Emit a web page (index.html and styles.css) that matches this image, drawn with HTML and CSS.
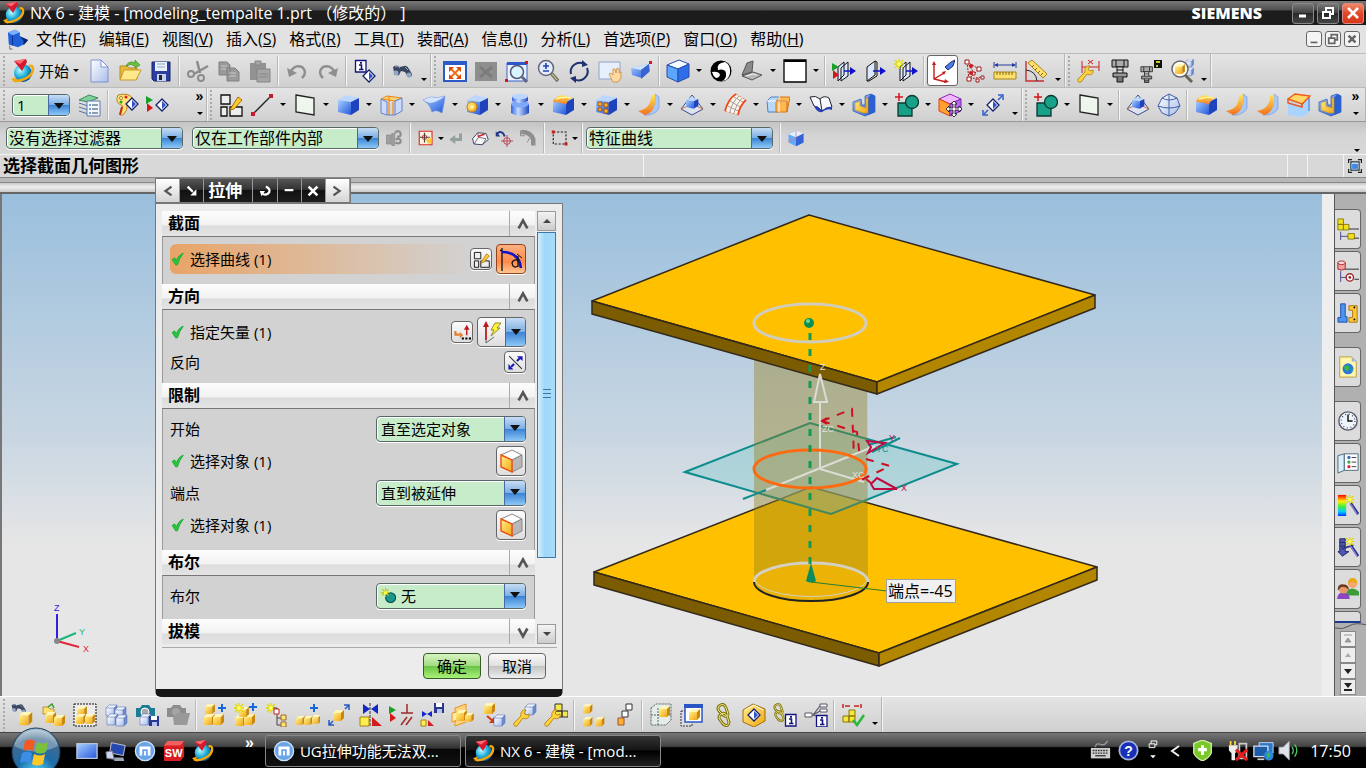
FILE: index.html
```html
<!DOCTYPE html>
<html lang="zh-CN">
<head>
	<meta charset="UTF-8">
	<title>NX 6 - 建模</title>
	<link rel="stylesheet" href="styles.css">
</head>
<body>
<svg class="sprite" width="0" height="0">
	<defs>
		<linearGradient id="gb" x1="0" y1="0" x2="1" y2="1"><stop offset="0" stop-color="#a9d0ff"/><stop offset="1" stop-color="#2357dc"/></linearGradient>
		<linearGradient id="gl" x1="0" y1="0" x2="1" y2="1"><stop offset="0" stop-color="#fff"/><stop offset="1" stop-color="#a9bdea"/></linearGradient>
		<linearGradient id="gy" x1="0" y1="0" x2="1" y2="1"><stop offset="0" stop-color="#fff08a"/><stop offset="1" stop-color="#f2a614"/></linearGradient>
		<linearGradient id="go" x1="0" y1="0" x2="0" y2="1"><stop offset="0" stop-color="#ffe95c"/><stop offset="1" stop-color="#f3701c"/></linearGradient>
		<linearGradient id="gc" x1="0" y1="0" x2="1" y2="0"><stop offset="0" stop-color="#3565e0"/><stop offset=".4" stop-color="#c4dcff"/><stop offset="1" stop-color="#2146c4"/></linearGradient>
		<radialGradient id="ge" cx=".35" cy=".35" r=".7"><stop offset="0" stop-color="#c8fbff"/><stop offset=".5" stop-color="#28b5e0"/><stop offset="1" stop-color="#08508c"/></radialGradient>
		<radialGradient id="gorb" cx=".5" cy=".95" r=".9"><stop offset="0" stop-color="#55e0ff"/><stop offset=".45" stop-color="#1e6ca8"/><stop offset=".8" stop-color="#406a90"/><stop offset="1" stop-color="#9bb6c8"/></radialGradient>
		<linearGradient id="rain" x1="0" y1="0" x2="0" y2="1"><stop offset="0" stop-color="#f00"/><stop offset=".3" stop-color="#fe0"/><stop offset=".55" stop-color="#4e4"/><stop offset=".8" stop-color="#0cf"/><stop offset="1" stop-color="#03f"/></linearGradient>
		<g id="cy"><path d="M0 3 3 0H11L8 3z" fill="#fff6b8"/><path d="M0 3H8V11H0z" fill="url(#gy)"/><path d="M8 3 11 0V8L8 11z" fill="#c8860c"/></g>
		<g id="cb"><path d="M0 3 3 0H11L8 3z" fill="#f2f7ff"/><path d="M0 3H8V11H0z" fill="url(#gl)"/><path d="M8 3 11 0V8L8 11z" fill="#6d8bd0"/><path d="M0 3 3 0H11V8L8 11H0zM0 3H8V11M8 3 11 0" fill="none" stroke="#5b76b4" stroke-width=".6"/></g>
		<g id="blk"><path d="M2 7 10 2 23 5 15 9z" fill="#bcd8ff"/><path d="M2 7 15 9V22L2 19z" fill="url(#gb)"/><path d="M15 9 23 5V17L15 22z" fill="#1d43bd"/></g>
		<g id="dia"><path d="M0-6 6 0 0 6-6 0z" fill="#fff" stroke="#15206e" stroke-width="1.3"/><path d="M0-4 4 0 0 4z" fill="#2f55cc"/></g>
		<g id="plus"><path d="M4 0V8M0 4H8" stroke="#1668dc" stroke-width="2"/></g>
		<g id="star"><path d="M5 0V10M0 5H10M1 1 9 9M9 1 1 9" stroke="#e0d800" stroke-width="1.3"/><circle cx="5" cy="5" r="2" fill="#ffff58"/></g>
		<g id="disk"><path d="M0 0H10V10H0z" fill="#2a3790"/><path d="M2 0H8V4H2z" fill="#fff"/><path d="M3 6H8V10H3z" fill="#b9c4ea"/></g>
		<g id="info"><path d="M.5.5H11V12H.5z" fill="#fff" stroke="#12127c" stroke-width="1.3"/><path d="M4 5H6.500V9.500M4 9.500H8.500" fill="none" stroke="#12127c" stroke-width="1.6"/><path d="M5 2H7V3.800H5z" fill="#12127c"/></g>
		<g id="wr"><path d="M1 17 8 10C7 6 10 3 13 4L11 7 13 9 16 8C17 12 13 14 10 12L4 20Q0 21 1 17z" fill="#ffd23c" stroke="#a8780c" stroke-width=".8"/></g>
		<g id="tri"><path d="M0 0 7 4 0 8z" fill="#18a028"/><path d="M1 7 7 12 1 16z" fill="#d41818"/></g>
		<g id="bino"><path d="M1 3Q4 0 8 3L12 2Q15 1 17 5L20 10Q20 14 16 13L13 8 9 7 7 11Q3 12 2 8z" fill="#3a4560"/><circle cx="4" cy="9" r="2.500" fill="#92a6c8"/><circle cx="17" cy="11" r="2.500" fill="#92a6c8"/><path d="M3 3Q6 1 8 4M13 3 16 6" fill="none" stroke="#9aa8c4"/></g>
		<g id="bolt0"><path d="M4 1H20V8H4zM8 1V8M16 1V8" fill="#aaa" stroke="#111"/><path d="M9 8H15V23H9z" fill="#ddd" stroke="#111"/><path d="M5 14H19V18H5z" fill="#999" stroke="#111"/><path d="M9 20H15M9 22H15M9 11H15" stroke="#111"/></g>
	</defs>

	<!-- standard -->
	<symbol id="nx" viewBox="0 0 24 24"><circle cx="12" cy="14" r="9" fill="url(#ge)"/><path d="M2 21C8 24 22 18 22 10Q22 6 18 7" fill="none" stroke="#f5a80c" stroke-width="2.600"/><path d="M0 20 5 18 5 24z" fill="#f5a80c"/><path d="M3 2 15 0 16 3 11 12z" fill="#d8172c"/><path d="M3 2 15 0 9 5z" fill="#ff6a70"/></symbol>
	<symbol id="part" viewBox="0 0 24 24"><path d="M1 5 9 2 14 5V9L23 13 18 18 12 21 2 18z" fill="#1f60d8"/><path d="M1 5 9 2 14 5 6 8z" fill="#7bb2ff"/><path d="M14 9 23 13 18 19V14z" fill="#08266e"/><path d="M6 8V19" stroke="#0b3090"/><path d="M3 19V23H6" fill="none" stroke="#667"/></symbol>
	<symbol id="new" viewBox="0 0 24 24"><path d="M4 1H14L21 8V23H4z" fill="url(#gl)" stroke="#7c92d8"/><path d="M14 1V8H21z" fill="#fff" stroke="#7c92d8"/></symbol>
	<symbol id="open" viewBox="0 0 24 24"><path d="M2 7H9L11 9H19V20H2z" fill="#e8b93c" stroke="#b98c1c"/><path d="M2 21 6 11H23L18 21z" fill="#ffe98c" stroke="#c39a28"/><path d="M8 7Q11 1 17 4V1L22 6 17 9V7Q13 4 8 7z" fill="#6cc23c" stroke="#3d8c1c" stroke-width=".7"/></symbol>
	<symbol id="save" viewBox="0 0 24 24"><path d="M3 3H21V22H5L3 20z" fill="#2b3fa0" stroke="#18256c"/><path d="M6 3H18V12H6z" fill="#e8f0ff"/><path d="M8 5H16M8 8H16" stroke="#9ab"/><path d="M8 15H17V22H8z" fill="#c7d0ee"/><path d="M10 16H13V21H10z" fill="#223"/></symbol>
	<symbol id="cut" viewBox="0 0 24 24"><path d="M11 2 14 14M22 7 8 15" stroke="#8c8c8c" stroke-width="2.500"/><circle cx="15" cy="19" r="3" fill="none" stroke="#8c8c8c" stroke-width="2"/><circle cx="5" cy="15" r="3" fill="none" stroke="#8c8c8c" stroke-width="2"/></symbol>
	<symbol id="copy" viewBox="0 0 24 24"><path d="M2 3H10L13 6V16H2zM10 9H18L22 13V22H10z" fill="#9a9a9a" stroke="#808080"/><path d="M12 14H19M12 17H19M4 7H10M4 10H9" stroke="#c8c8c8"/></symbol>
	<symbol id="paste" viewBox="0 0 24 24"><path d="M2 4H18V21H2z" fill="#929292"/><path d="M7 2H13V6H7zM9 10H22V23H9z" fill="#a5a5a5" stroke="#858585"/><path d="M11 15H20M11 18H20" stroke="#888"/></symbol>
	<symbol id="undo" viewBox="0 0 24 24"><path d="M5 14Q9 5 17 8 23 13 17 19" fill="none" stroke="#8e8e8e" stroke-width="2.500"/><path d="M2 9 4 18 12 14z" fill="#8e8e8e"/></symbol>
	<symbol id="redo" viewBox="0 0 24 24"><path d="M19 14Q15 5 7 8 1 13 7 19" fill="none" stroke="#8e8e8e" stroke-width="2.500"/><path d="M22 9 20 18 12 14z" fill="#8e8e8e"/></symbol>
	<symbol id="infod" viewBox="0 0 24 24"><use href="#info" x="2" y="1"/><use href="#dia" x="16" y="17"/></symbol>
	<symbol id="find" viewBox="0 0 24 24"><use href="#bino" x="2" y="5"/></symbol>

	<!-- view -->
	<symbol id="fit" viewBox="0 0 24 24"><path d="M1 3H23V22H1z" fill="#fff" stroke="#2b59c8" stroke-width="2"/><path d="M0 2H24V6H0z" fill="#2b59c8"/><path d="M8 10 16 18M16 10 8 18" stroke="#f07018" stroke-width="2"/><path d="M6 8H11L6 13zM18 8V13L13 8zM6 20V15L11 20zM18 20H13L18 15z" fill="#e04808"/></symbol>
	<symbol id="fitg" viewBox="0 0 24 24"><path d="M1 3H23V22H1z" fill="#8e8e8e"/><path d="M6 8 18 18M18 8 6 18" stroke="#7c7c7c" stroke-width="3"/></symbol>
	<symbol id="zbox" viewBox="0 0 24 24"><path d="M2 4H22V22H2z" fill="#eaf2ff" stroke="#3a62c8"/><path d="M2 3H22V6H2z" fill="#2b59c8"/><circle cx="12" cy="13" r="6.500" fill="#d9f4ff" stroke="#557" stroke-width="1.500"/><path d="M17 18 22 23" stroke="#668" stroke-width="3"/><path d="M0 20H3V23H0zM20 2H23V5H20z" fill="#d01818"/></symbol>
	<symbol id="zpm" viewBox="0 0 24 24"><circle cx="10" cy="9" r="7.500" fill="#e3edff" stroke="#667" stroke-width="1.500"/><path d="M10 4V10M7 7H13M7 12H13" stroke="#2244b0" stroke-width="1.600"/><path d="M15 14 22 22" stroke="#776" stroke-width="3.500"/><path d="M16 15 21 21" stroke="#ecd6a0"/></symbol>
	<symbol id="rot" viewBox="0 0 24 24"><path d="M4 15A9 9 0 0 1 17 5M20 9A9 9 0 0 1 7 20" fill="none" stroke="#203070" stroke-width="2"/><path d="M15 1 21 6 15 8zM9 24 3 19 9 17z" fill="#203070"/></symbol>
	<symbol id="pan" viewBox="0 0 24 24"><path d="M1 3H22V20H1z" fill="#e8effc" stroke="#8fa2cc"/><path d="M11 15 13 14 15 16V10L17 10 18 14 19 9 21 10V14L23 13V19L20 23H15z" fill="#ffd9a0" stroke="#c88a3c" stroke-width=".8"/></symbol>
	<symbol id="persp" viewBox="0 0 24 24"><path d="M2 9 20 5 21 12 13 19 3 16z" fill="url(#gb)"/><path d="M2 9 20 5 12 11z" fill="#cfe2ff"/><path d="M12 11V20L20 13V5z" fill="#3a62d0"/><path d="M20 2H23V5H20z" fill="#d01818"/></symbol>
	<symbol id="cube" viewBox="0 0 24 24"><path d="M1 6 13 1 23 5 12 10z" fill="#f4fbff" stroke="#2a4aa8"/><path d="M1 6 12 10V23L1 18z" fill="#5ba6ff" stroke="#2a4aa8"/><path d="M12 10 23 5V18L12 23z" fill="#2e6ee8" stroke="#2a4aa8"/></symbol>
	<symbol id="yin" viewBox="0 0 24 24"><circle cx="12" cy="12" r="10.500" fill="#000"/><path d="M16 3Q7 4 9 11 18 9 17 17 16 21 13 22 20 21 21 14 22 6 16 3zM3 13Q10 12 11 16 10 19 7 19 4 17 3 13z" fill="#fff"/></symbol>
	<symbol id="laptop" viewBox="0 0 24 24"><path d="M2 16 7 4 13 2 12 13z" fill="#8a8a8a" stroke="#555"/><path d="M2 17 13 13 22 16 12 21z" fill="#b8b8b8" stroke="#555"/><path d="M6 17 13 15 17 16" fill="none" stroke="#eee"/></symbol>
	<symbol id="white" viewBox="0 0 24 24"><path d="M1 1H23V23H1z" fill="#fff" stroke="#000" stroke-width="1.300"/><path d="M1 1H23V3H1z"/></symbol>
	<symbol id="sec0" viewBox="0 0 24 24"><path d="M6 8 12 3V16L6 22zM9 9 16 3V17L9 22z" fill="#dce8ff" stroke="#111"/><path d="M12 12H20" stroke="#1010c8" stroke-width="1.500"/><path d="M18 8 24 12 18 16z" fill="#1010c8"/></symbol>
	<symbol id="sec1" viewBox="0 0 24 24"><use href="#sec0" width="24" height="24"/><use href="#tri" x="0" y="4"/></symbol>
	<symbol id="sec2" viewBox="0 0 24 24"><path d="M4 8 12 2V16L4 22z" fill="#dce8ff" stroke="#111"/><path d="M12 2 14 3V17L6 22 4 22" fill="none" stroke="#111"/><path d="M10 12H20" stroke="#1010c8" stroke-width="1.500"/><path d="M17 8 23 12 17 16z" fill="#1010c8"/></symbol>
	<symbol id="sec3" viewBox="0 0 24 24"><use href="#sec0" width="24" height="24"/><use href="#star" x="0" y="0"/></symbol>
	<symbol id="csys" viewBox="0 0 24 24"><path d="M3 5V20L15 23M3 20 13 14" fill="none" stroke="#c81818" stroke-width="1.400"/><path d="M1 6 3 2 5 6zM14 20 18 23 13 24zM11 13 15 12 13 16z" fill="#c81818"/><path d="M14 8 20 3 24 1 22 7 17 11z" fill="#4a7fe8" stroke="#182a70"/></symbol>
	<symbol id="csysb" viewBox="0 0 24 24"><path d="M5 3 7 20 21 18M5 3 17 10 7 20M5 3 12 14" fill="none" stroke="#a02020" stroke-dasharray="2 1"/><path d="M3 1H7V5H3zM15 8H19V12H15zM5 18H9V22H5zM19 17H22V20H19zM10 13H13V16H10zM14 20H17V23H14z" fill="#fff" stroke="#a01818"/><circle cx="9" cy="7" r="2" fill="#d01818"/><circle cx="9" cy="14" r="2" fill="#d01818"/></symbol>
	<symbol id="ruler" viewBox="0 0 24 24"><path d="M1 3V9M23 3V9M2 6H22" stroke="#223c9c"/><path d="M1 6 5 4V8zM23 6 19 4V8z" fill="#223c9c"/><path d="M1 13H23V20H1z" fill="#ffe06c" stroke="#a8841c"/><path d="M4 13V16M7 13V16M10 13V16M13 13V16M16 13V16M19 13V16" stroke="#86680c"/></symbol>
	<symbol id="angle" viewBox="0 0 24 24"><path d="M2 2V22H20" fill="none" stroke="#c83030" stroke-width="1.400"/><path d="M2 11Q12 12 13 22" fill="none" stroke="#222"/><path d="M4 4 8 1 23 15 19 19z" fill="#ffe06c" stroke="#a8841c"/><path d="M8 8 10 6M11 11 13 9M14 14 16 12M17 16 19 14" stroke="#86680c"/></symbol>
	<symbol id="wrench" viewBox="0 0 24 24"><path d="M5 2V14M22 2V12M5 8H22" stroke="#c82020"/><path d="M11 1 16 5M16 1 11 5" stroke="#c82020"/><use href="#wr" y="3"/></symbol>
	<symbol id="bolt" viewBox="0 0 24 24"><use href="#bolt0"/></symbol>
	<symbol id="bolts" viewBox="0 0 24 24"><g transform="translate(-1 7) scale(.72)"><use href="#bolt0"/></g><path d="M15 1H23V9H15z" fill="#111"/><path d="M17 2H21V4H17zM17 6H19V8H17z" fill="#cc3"/></symbol>
	<symbol id="magc" viewBox="0 0 24 24"><use href="#cb" transform="translate(16 0) scale(.7)"/><use href="#cb" transform="translate(16 9) scale(.7)"/><circle cx="10" cy="10" r="8" fill="#fffbe8" stroke="#667" stroke-width="1.500"/><use href="#cy" transform="translate(5 5) scale(.9)"/><path d="M15 16 22 23" stroke="#665" stroke-width="3"/></symbol>

	<!-- feature -->
	<symbol id="layers" viewBox="0 0 24 24"><path d="M1 7 11 2 20 5 10 9z" fill="#7ed09c" stroke="#3a8c5c"/><path d="M1 10 10 13M1 14 10 17M1 18 10 21" stroke="#57a"/><path d="M9 8H22V23H9z" fill="#f2f6ff" stroke="#6478a8"/><path d="M14 12H20M14 16H20M14 20H20" stroke="#345"/><path d="M11 11H13V13H11zM11 15H13V17H11zM11 19H13V21H11z" fill="#6aa0e0"/></symbol>
	<symbol id="palette" viewBox="0 0 24 24"><path d="M3 2Q14-1 18 6 19 11 12 12 13 17 9 21 6 24 5 20L8 13Q-1 10 3 2z" fill="#ffe07c" stroke="#b98420"/><circle cx="6" cy="5" r="1.500" fill="#fff" stroke="#a80"/><circle cx="11" cy="4" r="1.500" fill="#d22"/><circle cx="6" cy="9" r="1.500" fill="#2a2"/><path d="M7 14 5 22" stroke="#c03010" stroke-width="2"/><use href="#dia" x="17" y="11"/></symbol>
	<symbol id="shide" viewBox="0 0 24 24"><use href="#tri" x="0" y="3"/><use href="#dia" x="16" y="12"/></symbol>
	<symbol id="sketch" viewBox="0 0 24 24"><path d="M2 2H11V11H2zM2 14H8V23H2zM11 14H23V23H11z" fill="#eee" stroke="#111" stroke-width="1.300"/><path d="M12 15 19 4 23 7 15 16 11 17z" fill="#ffcc30" stroke="#a86c08"/></symbol>
	<symbol id="line" viewBox="0 0 24 24"><path d="M3 21 21 3" stroke="#222" stroke-width="1.300"/><path d="M1 19H5V23H1zM19 1H23V5H19z" fill="#c81830"/></symbol>
	<symbol id="plane" viewBox="0 0 24 24"><path d="M3 2 21 5V22L3 19z" fill="#eef6ee" stroke="#222" stroke-width="1.300"/></symbol>
	<symbol id="box" viewBox="0 0 24 24"><use href="#blk"/></symbol>
	<symbol id="extr" viewBox="0 0 24 24"><path d="M2 6 8 3 23 5 16 8z" fill="#ffd070" stroke="#e08820"/><path d="M2 6V20L8 22V9zM16 8V22L23 18V5z" fill="#c8dcff" fill-opacity=".8" stroke="#6480d0"/><path d="M10 3V22M14 9V22" stroke="#f09020" stroke-width="1.300"/><path d="M8 22H16" stroke="#6480d0"/></symbol>
	<symbol id="sheet" viewBox="0 0 24 24"><path d="M1 7 9 4Q16 6 23 3L22 10 20 20Q14 16 10 19 8 11 1 7z" fill="url(#gb)" stroke="#6c8cdc" stroke-width=".7"/><path d="M1 7 9 4Q16 6 23 3 16 9 8 10z" fill="#d4e4ff"/></symbol>
	<symbol id="hole" viewBox="0 0 24 24"><use href="#blk"/><circle cx="7" cy="14" r="5" fill="url(#gy)" stroke="#c07808"/><circle cx="7" cy="14" r="2" fill="#ffef9c"/></symbol>
	<symbol id="cyl" viewBox="0 0 24 24"><path d="M3 11V20Q12 26 21 20V11z" fill="url(#gc)"/><ellipse cx="12" cy="11" rx="9" ry="3.500" fill="#7ea8f8"/><path d="M4 3V8Q12 12 20 8V3z" fill="url(#gc)"/><ellipse cx="12" cy="3.500" rx="8" ry="2.700" fill="#bcd6ff"/></symbol>
	<symbol id="blend" viewBox="0 0 24 24"><use href="#blk"/><path d="M2 9Q3 4 10 2L23 5Q16 6 15 12 14 10 2 9z" fill="url(#go)"/><path d="M5 6Q12 3 20 5" fill="none" stroke="#fff5a0" stroke-width="1.500"/></symbol>
	<symbol id="pat" viewBox="0 0 24 24"><use href="#blk"/><path d="M4 9H8V13H4zM10 10H14V14H10zM4 15H8V18H4zM10 16H14V20H10z" fill="#ffb02c" stroke="#8c3c08" stroke-width=".8"/></symbol>
	<symbol id="fil" viewBox="0 0 24 24"><path d="M18 1 22 4V15Q20 20 12 22H7Q19 19 18 1z" fill="#a8c8fa" stroke="#6890d8" stroke-width=".6"/><path d="M14 3 18 1Q20 19 8 22L1 18Q14 16 14 3z" fill="url(#go)"/></symbol>
	<symbol id="pyr" viewBox="0 0 24 24"><path d="M12 2 23 16 12 22 1 16z" fill="#dfe8f8" fill-opacity=".7" stroke="#3a5090"/><path d="M1 16 12 11 23 16" fill="none" stroke="#e07030"/><use href="#blk" transform="translate(5 3) scale(.58)"/></symbol>
	<symbol id="mesh" viewBox="0 0 24 24"><path d="M4 10Q8 3 14 2L22 7Q17 12 14 21L3 18Q5 13 4 10z" fill="#fff4e8"/><path d="M7 19Q9 9 16 3M11 20Q13 11 19 5M7 8 17 14M5 13 15 18M11 4 20 9" fill="none" stroke="#a0a0a0"/><path d="M2 18Q5 6 13 1M15 22Q17 12 23 7" fill="none" stroke="#f04818" stroke-width="1.800"/><path d="M2 18 15 22M13 1 23 7" stroke="#f08058" stroke-dasharray="2 2"/></symbol>
	<symbol id="trim" viewBox="0 0 24 24"><path d="M1 8 5 4H13L12 19H2z" fill="#b8d8fa" stroke="#5080c0"/><path d="M10 8 14 4H24L21 19H10z" fill="#ffb850" stroke="#d07818"/><path d="M1 8H22M13 4V19" stroke="#fff"/><path d="M10 8H21V19" fill="none" stroke="#c86a10"/></symbol>
	<symbol id="book" viewBox="0 0 24 24"><path d="M1 4Q7 2 11 6 15 2 20 5L23 14Q17 14 13 18 9 13 5 13z" fill="#f5f8ff" stroke="#222"/><path d="M11 6 13 18" stroke="#222"/><path d="M5 13Q8 20 13 19 18 15 23 17L23 14Q17 14 13 18 9 13 5 13z" fill="#2440c0"/></symbol>
	<symbol id="ublk" viewBox="0 0 24 24"><path d="M1 9 9 6 10 12 13 12V3L19 1 23 3V19L13 23 1 18z" fill="url(#gb)" stroke="#2a58b0" stroke-width=".7"/><path d="M19 1 23 3V19L16 22V5z" fill="#2a60d0"/><path d="M3 10 8 8V13L14 15V5L16 5V20L11 20 3 17z" fill="url(#gy)" stroke="#c88810" stroke-width=".6"/></symbol>
	<symbol id="unite" viewBox="0 0 24 24"><path d="M3 10H17V23H3z" fill="#18a088" stroke="#0c3830" stroke-width="1.300"/><circle cx="17" cy="9" r="6.500" fill="#18a088" stroke="#0c3830" stroke-width="1.300"/><path d="M4 0V8M0 4H8" stroke="#d01818" stroke-width="1.500"/></symbol>
	<symbol id="move" viewBox="0 0 24 24"><path d="M1 6 12 1 23 6 12 11z" fill="#f0b8ff" stroke="#8c28b0"/><path d="M1 6 12 11V23L1 18z" fill="#ffa030" stroke="#e04010"/><path d="M12 11 23 6V18L12 23z" fill="#b868f0" stroke="#7028a0"/><path d="M16 8 19 11H17V15H21V13L24 16 21 19V17H17V21H19L16 24 13 21H15V17H11V19L8 16 11 13V15H15V11H13z" fill="#fff" stroke="#111" stroke-width=".8"/></symbol>
	<symbol id="dias" viewBox="0 0 24 24"><use href="#dia" x="12" y="12"/><path d="M17 7 21 3M7 17 3 21" stroke="#3060c8" stroke-width="1.500"/><path d="M17 2H22V7M2 17V22H7" fill="none" stroke="#3060c8" stroke-width="1.500"/></symbol>
	<symbol id="sph" viewBox="0 0 24 24"><path d="M12 1 20 5 23 13 18 20 12 23 5 20 1 13 5 5z" fill="url(#gl)" stroke="#4060a8"/><path d="M12 1V23M1 13Q12 17 23 13M5 5Q12 9 20 5" fill="none" stroke="#4060a8"/></symbol>
	<symbol id="shell" viewBox="0 0 24 24"><path d="M1 8 15 13V24L1 22zM15 13 23 4V19L15 24z" fill="#a8d4ff"/><path d="M13 14 22 4V18" fill="none" stroke="#3a78d0"/><path d="M1 6 8 1 23 3 15 11z" fill="#ffd868" stroke="#f05818" stroke-width="1.400"/><path d="M1 6V10L15 14V11" fill="none" stroke="#f05818" stroke-width="1.400"/></symbol>

	<!-- selection bar -->
	<symbol id="grays" viewBox="0 0 24 24"><path d="M2 8H8V20H2zM9 6H13V22H9z" fill="#a0a0a0" stroke="#888"/><path d="M13 5Q20 0 21 7 21 11 16 10M14 14Q21 11 21 17 19 21 14 18" fill="none" stroke="#8e8e8e" stroke-width="3"/></symbol>
	<symbol id="snap" viewBox="0 0 24 24"><path d="M3 3H20V21H3z" fill="#f6f0dc" stroke="#e02828" stroke-width="1.500"/><path d="M4 11H17M10 5V18" stroke="#444" stroke-width="1.500"/><circle cx="10" cy="11" r="3" fill="none" stroke="#a22"/><path d="M12 14 20 11 19 20 14 19z" fill="#ffc83c"/></symbol>
	<symbol id="ret" viewBox="0 0 24 24"><path d="M18 6V14H9" fill="none" stroke="#94a09c" stroke-width="4"/><path d="M11 8V20L3 14z" fill="#94a09c"/></symbol>
	<symbol id="erase" viewBox="0 0 24 24"><path d="M2 13 9 5 20 6 23 14 15 21 4 20z" fill="#f8f8f8" stroke="#446" stroke-width="1.300"/><path d="M4 20 10 11 20 13 15 21M10 11 9 5" fill="none" stroke="#446"/><path d="M9 10 18 7" stroke="#d22" stroke-width="2"/></symbol>
	<symbol id="aim" viewBox="0 0 24 24"><path d="M2 8Q6 1 11 6L13 10" fill="none" stroke="#203888" stroke-width="2.500"/><path d="M1 3V10H7z" fill="#203888"/><circle cx="16" cy="16" r="4.500" fill="none" stroke="#b02030"/><path d="M16 8V24M8 16H24" stroke="#b02030"/></symbol>
	<symbol id="hose" viewBox="0 0 24 24"><path d="M3 4Q16 4 19 14V22" fill="none" stroke="#8e8e8e" stroke-width="6"/><path d="M8 9H2V2M14 12 11 18" stroke="#777" fill="none"/></symbol>
	<symbol id="dots" viewBox="0 0 24 24"><path d="M3 4H20V20H3z" fill="none" stroke="#222" stroke-width="1.500" stroke-dasharray="3 2"/><path d="M1 2H5V6H1zM18 18H22V22H18z" fill="#d01818"/></symbol>
	<symbol id="gcube" viewBox="0 0 24 24"><path d="M2 7 13 2 22 6V18L12 23 2 18z" fill="#64a8f8"/><path d="M2 7 13 2 22 6 12 11z" fill="#e4f2ff"/><path d="M12 11 22 6V18L12 23z" fill="#3464d8"/><path d="M12 2V12L2 17" fill="none" stroke="#e07080"/></symbol>
	<symbol id="full" viewBox="0 0 24 24"><path d="M1 7V1H7M17 1H23V7M23 17V23H17M7 23H1V17" fill="none" stroke="#222" stroke-width="2"/><path d="M5 5H19V19H5z" fill="#fff" stroke="#234" stroke-width="2"/><path d="M7 8H17V17H7z" fill="#3c88e8"/></symbol>

	<!-- assembly -->
	<symbol id="a1" viewBox="0 0 24 24"><g transform="scale(.75)"><use href="#bino"/></g><use href="#cy" transform="translate(8 9) scale(1.2)"/></symbol>
	<symbol id="a2" viewBox="0 0 24 24"><path d="M1 4H6L8 6H12V11H1z" fill="#ffe070" stroke="#a88418" stroke-width=".8"/><path d="M6 4 10 1 12 5" fill="none" stroke="#3a9c28" stroke-width="1.500"/><use href="#cy" x="3" y="9"/><use href="#cy" x="12" y="12"/></symbol>
	<symbol id="a3" viewBox="0 0 24 24"><path d="M1 1H23V23H1z" fill="#ececec" stroke="#111" stroke-dasharray="2 1"/><use href="#cy" transform="translate(4 3) scale(.9)"/><use href="#cy" transform="translate(3 11) scale(.9)"/><use href="#cy" transform="translate(12 11) scale(.9)"/></symbol>
	<symbol id="a4" viewBox="0 0 24 24"><use href="#cb" x="2" y="2"/><use href="#cb" x="11" y="4"/><use href="#cb" x="3" y="11"/><use href="#cb" x="12" y="12"/></symbol>
	<symbol id="cam" viewBox="0 0 24 24"><path d="M1 5H5L7 2H14L16 5H20V14H1z"/><circle cx="10" cy="9" r="4" fill="#aaa" stroke="#fff"/></symbol>
	<symbol id="a5" viewBox="0 0 24 24"><use href="#cam" width="24" height="24" fill="#1c7c94"/><use href="#cb" x="5" y="11"/><use href="#disk" x="14" y="13"/></symbol>
	<symbol id="a6" viewBox="0 0 24 24"><path d="M1 5H5L7 2H14L16 5H20V14H1z" fill="#8c8c8c"/><circle cx="10" cy="9" r="4" fill="#a4a4a4"/><path d="M7 14 12 10H24L21 22H8z" fill="#999"/></symbol>
	<symbol id="a7" viewBox="0 0 24 24"><use href="#cy" transform="translate(2 1) scale(.9)"/><use href="#cy" x="1" y="11" /><use href="#cy" x="10" y="11"/><use href="#plus" x="15" y="1"/></symbol>
	<symbol id="a8" viewBox="0 0 24 24"><use href="#cy" x="1" y="12"/><use href="#cy" x="10" y="11"/><use href="#cy" transform="translate(5 4) scale(.9)"/><use href="#star" x="0" y="0"/><use href="#plus" x="15" y="0"/></symbol>
	<symbol id="a9" viewBox="0 0 24 24"><use href="#star" x="1" y="0"/><path d="M12 9V22H16M12 15H16M8 5H12V9" fill="none" stroke="#444"/><path d="M9 6H14V11H9z" fill="#fff" stroke="#c22"/><path d="M16 12H21V17H16zM16 19H21V24H16z" fill="#ffe46c" stroke="#963"/></symbol>
	<symbol id="a10" viewBox="0 0 24 24"><use href="#cy" transform="translate(0 13) scale(.8)"/><use href="#cy" transform="translate(8 13) scale(.8)"/><use href="#cy" transform="translate(16 12) scale(.8)"/><use href="#plus" x="14" y="1"/></symbol>
	<symbol id="a11" viewBox="0 0 24 24"><use href="#cy" x="6" y="7"/><path d="M17 2H22V7M22 2 18 6M2 17V22H7M2 22 6 18" fill="none" stroke="#2858c0" stroke-width="1.500"/></symbol>
	<symbol id="a12" viewBox="0 0 24 24"><path d="M5 1 12 6 5 11zM20 1 13 6 20 11z" fill="#1428c8"/><path d="M12 0V24" stroke="#333" stroke-dasharray="3 1"/><path d="M2 14H11V23H2z" fill="#ffee50" stroke="#a58408"/><path d="M14 14 24 23H14z" fill="#d41c1c"/></symbol>
	<symbol id="a13" viewBox="0 0 24 24"><use href="#tri" x="0" y="3"/><path d="M18 1V10M12 10H24M12 22 18 14M17 22 23 14" stroke="#a02828" stroke-width="1.500"/></symbol>
	<symbol id="a14" viewBox="0 0 24 24"><path d="M2 8 7 11 2 14zM12 8 7 11 12 14z" fill="#1428c8"/><path d="M1 17H6V23H1z" fill="#ffee50" stroke="#a58408"/><path d="M8 17 14 23H8z" fill="#d41c1c"/><use href="#disk" x="14" y="0"/></symbol>
	<symbol id="a15" viewBox="0 0 24 24"><path d="M4 5 15 1V19L4 23z" fill="#ffd480" stroke="#e8941c"/><path d="M1 10 6 9V17L1 19z" fill="#ffe8b0" stroke="#e8941c"/><use href="#cy" x="5" y="7"/><use href="#cy" transform="translate(14 10) scale(.8)"/></symbol>
	<symbol id="a16" viewBox="0 0 24 24"><use href="#cy" x="2" y="0"/><use href="#cb" x="12" y="12"/><path d="M5 13 11 18" stroke="#d03810" stroke-width="2"/><path d="M12 14V20H7z" fill="#d03810"/></symbol>
	<symbol id="a17" viewBox="0 0 24 24"><use href="#cb" x="12" y="1"/><use href="#wr" y="3"/></symbol>
	<symbol id="a18" viewBox="0 0 24 24"><path d="M11 1H18V8H11zM11 8H18V14H11zM18 8H24V14H18z" fill="#f3e850" stroke="#333"/><use href="#wr" y="3"/></symbol>
	<symbol id="a19" viewBox="0 0 24 24"><use href="#cy" transform="translate(2 1) scale(.85)"/><use href="#cy" transform="translate(2 14) scale(.85)"/><use href="#cy" transform="translate(14 14) scale(.85)"/></symbol>
	<symbol id="a20" viewBox="0 0 24 24"><path d="M14 1H20V7H14zM10 8H16V14H10z" fill="#fff" stroke="#333"/><path d="M6 15H12V22H6z" fill="#ffb030" stroke="#953"/></symbol>
	<symbol id="a21" viewBox="0 0 24 24"><path d="M2 5 7 1H22V17L17 22H2zM2 12H22M9 5V22" fill="#e4ece8" stroke="#586860" stroke-dasharray="2 1"/><use href="#cy" x="10" y="3"/></symbol>
	<symbol id="a22" viewBox="0 0 24 24"><path d="M1 8H12V23H1z" fill="#ddd" stroke="#333" stroke-dasharray="2 1"/><path d="M5 2H22V19H5z" fill="#fff" stroke="#2b55c4" stroke-width="1.500"/><path d="M4 1H23V5H4z" fill="#2b55c4"/><use href="#cy" x="9" y="6"/></symbol>
	<symbol id="chain" viewBox="0 0 24 24"><path d="M8 3Q13-1 15 5L17 11Q16 15 12 12L8 8Q6 5 8 3zM9 12Q13 8 16 13L18 19Q17 25 12 21L9 17Q7 14 9 12z" fill="none" stroke="#807818" stroke-width="3"/><path d="M8 3Q13-1 15 5L17 11Q16 15 12 12L8 8Q6 5 8 3zM9 12Q13 8 16 13L18 19Q17 25 12 21L9 17Q7 14 9 12z" fill="none" stroke="#f0e27c"/></symbol>
	<symbol id="a24" viewBox="0 0 24 24"><path d="M1 7 11 1 23 6V18L12 24 1 19z" fill="url(#gy)" stroke="#a06c08"/><path d="M3 7 12 2 21 7" fill="none" stroke="#fff"/><use href="#dia" x="12" y="12"/></symbol>
	<symbol id="a25" viewBox="0 0 24 24"><g transform="translate(-4 0) scale(.8)"><use href="#chain" width="24" height="24"/></g><use href="#info" x="12" y="11"/></symbol>
	<symbol id="a26" viewBox="0 0 24 24"><path d="M1 12H9M9 12 16 3H23M9 12 16 8H23M9 12 15 14" fill="none" stroke="#556" stroke-width="1.200"/><path d="M1 10H8V14H1zM16 1H23V4H16zM16 6H23V9H16z" fill="#fff" stroke="#556"/><use href="#info" x="12" y="12"/></symbol>
	<symbol id="a27" viewBox="0 0 24 24"><path d="M4 3H9M18 3H13M2 1V5M20 1V5" stroke="#c82020" stroke-width="1.500"/><path d="M8 7H14V13H8zM2 13H8V19H2zM8 13H14V19H8z" fill="#f4e838" stroke="#877408"/><path d="M12 17 16 22 23 12" fill="none" stroke="#28b838" stroke-width="2.500"/></symbol>

	<!-- dialog -->
	<symbol id="check" viewBox="0 0 24 24"><path d="M2 13 6 10 9 15Q13 5 21 2 14 11 11 22H8z" fill="#28c838" stroke="#18a830" stroke-width="1.500"/></symbol>
	<symbol id="curve" viewBox="0 0 24 24"><path d="M3 1V24M1 3 4 5" stroke="#111" fill="none" stroke-width="1.300"/><path d="M3 5Q20 5 22 21" fill="none" stroke="#1010d0" stroke-width="2.600"/><path d="M19 9V20M19 13Q14 12 13 16 14 22 19 19" fill="none" stroke="#111" stroke-width="1.300"/><path d="M18 7 23 11" stroke="#111"/></symbol>
	<symbol id="vec" viewBox="0 0 24 24"><path d="M18 4V16" stroke="#c01818" stroke-width="2"/><path d="M14 8 18 1 22 8z" fill="#c01818"/><path d="M2 10V15H8" stroke="#e08030" stroke-width="3" fill="none"/><path d="M8 11V20L13 16z" fill="#e08030"/><path d="M11 19H14V22H11zM16 19H19V22H16zM21 19H24V22H21z"/></symbol>
	<symbol id="flash" viewBox="0 0 24 24"><path d="M6 6V23L14 17" stroke="#666" fill="none"/><path d="M6 6V20" stroke="#c01818" stroke-width="1.600"/><path d="M3 7 6 1 9 7z" fill="#c01818"/><path d="M15 3H21L17 8H20L11 16 14 10H11z" fill="#fff23c" stroke="#7a7a10" stroke-width=".8"/></symbol>
	<symbol id="rev" viewBox="0 0 24 24"><path d="M3 3 21 21" stroke="#333" stroke-width="1.500"/><path d="M14 10 18 6M10 14 6 18" stroke="#1818b8" stroke-width="3"/><path d="M14 3H22V10zM2 14V22H9z" fill="#1818b8"/></symbol>
	<symbol id="face" viewBox="0 0 24 24"><path d="M2 6 13 1 23 6 13 11z" fill="#fff" stroke="#888"/><path d="M13 11 23 6V18L13 23z" fill="#b8b8b8" stroke="#888"/><path d="M2 6 13 11V23L2 18z" fill="url(#gy)" stroke="#f05010" stroke-width="1.400"/></symbol>
	<symbol id="none" viewBox="0 0 24 24"><circle cx="15" cy="15" r="7" fill="#18988c" stroke="#0c4840" stroke-width="1.500"/><path d="M8 1V14M1 8H14M3 3 12 12M12 3 3 12" stroke="#c8c000" stroke-width="1.500"/><circle cx="8" cy="8" r="2.500" fill="#ffff40"/></symbol>

	<!-- resource bar -->
	<symbol id="r1" viewBox="0 0 24 24"><path d="M1 1H7V7H1zM1 7H7V13H1zM7 7H13V13H7zM12 17H19V23H12z" fill="#f0e020" stroke="#877a10"/><path d="M13 12H24M19 22H24" stroke="#222"/><path d="M4 15V24M4 20H12" stroke="#448" fill="none"/></symbol>
	<symbol id="r2" viewBox="0 0 24 24"><path d="M1 3V10Q5 12 9 10V3z" fill="#f0a0a0" stroke="#a02828"/><ellipse cx="5" cy="3" rx="4" ry="2" fill="#ffdcdc" stroke="#a02828"/><path d="M9 10H24M19 21H24" stroke="#222"/><path d="M4 12V24M4 19H11" stroke="#448"/><circle cx="14" cy="19" r="4" fill="#fff" stroke="#a02828" stroke-width="1.500"/><circle cx="14" cy="19" r="1.500" fill="#a02828"/></symbol>
	<symbol id="r3" viewBox="0 0 24 24"><path d="M4 2H9V16H11V22H1V17H4z" fill="#4c94f0" stroke="#1c4ca8"/><path d="M13 4H22V22H13V17H17V9H13z" fill="#ffc838" stroke="#a8740c"/><circle cx="19" cy="6" r="1"/><circle cx="19" cy="19" r="1"/></symbol>
	<symbol id="r4" viewBox="0 0 24 24"><path d="M3 1H16L21 6V23H3z" fill="#fff6b0" stroke="#b89c30"/><path d="M16 1V6H21z" fill="#9bd"/><circle cx="12" cy="14" r="6" fill="#2c78d8"/><path d="M8 11 12 10 14 13 11 17 8 14zM15 15 17 13V17z" fill="#38b848"/></symbol>
	<symbol id="r5" viewBox="0 0 24 24"><circle cx="12" cy="12" r="10" fill="#eef5fb" stroke="#556" stroke-width="1.500"/><circle cx="12" cy="12" r="7.500" fill="none" stroke="#446" stroke-width="1.500" stroke-dasharray="1 3"/><path d="M12 5V12H17" fill="none" stroke="#111" stroke-width="1.600"/></symbol>
	<symbol id="r6" viewBox="0 0 24 24"><path d="M1 4 8 2V20L1 23z" fill="#d8eef8" stroke="#467"/><path d="M8 2H23V20H8z" fill="#fff" stroke="#467"/><path d="M16 6H21M16 11H21M16 16H21" stroke="#333"/><circle cx="13" cy="6" r="1.800" fill="#46b"/><circle cx="13" cy="11" r="1.800" fill="#3a4"/><circle cx="13" cy="16" r="1.800" fill="#d24"/></symbol>
	<symbol id="wand" viewBox="0 0 24 24"><path d="M15 10 23 22" stroke="#303090" stroke-width="3"/><path d="M15 11 22 22" stroke="#a8a8f0"/><use href="#star" x="9" y="1"/></symbol>
	<symbol id="r7" viewBox="0 0 24 24"><path d="M1 1H10V24H1z" fill="url(#rain)"/><use href="#wand" width="24" height="24"/></symbol>
	<symbol id="r8" viewBox="0 0 24 24"><path d="M3 3H9V17H13L6 22 1 17H3zM3 7H9M3 11H9" fill="#5058b0" stroke="#202460"/><path d="M5 14 18 10" stroke="#303880" stroke-width="2"/><use href="#wand" width="24" height="24"/></symbol>
	<symbol id="r9" viewBox="0 0 24 24"><path d="M10 15Q16 8 24 15V19H10z" fill="#3c9c38"/><circle cx="17" cy="6" r="5" fill="#f5a868"/><path d="M12 6Q12 0 17 0T22 6Q17 2 12 6z" fill="#e8a818"/><path d="M0 23Q1 15 7 16 14 16 14 23z" fill="#8848c0"/><circle cx="7" cy="12" r="5" fill="#e89868"/><path d="M1 14Q0 6 7 7 13 7 13 13 9 8 4 10z" fill="#683820"/></symbol>

	<!-- desktop -->
	<symbol id="desk" viewBox="0 0 24 24"><path d="M1 4H23V20H1z" fill="url(#gb)" stroke="#b8c4dc" stroke-width="1.500"/></symbol>
	<symbol id="pc" viewBox="0 0 24 24"><path d="M7 3 22 6 20 17 5 14z" fill="#2448b0" stroke="#ccd"/><path d="M1 13 8 12 10 21 2 20z" fill="#cdd5ee" stroke="#778"/><path d="M10 19 20 19 21 23H10z" fill="#9ca4bc"/></symbol>
	<symbol id="mx" viewBox="0 0 24 24"><circle cx="12" cy="12" r="10.500" fill="#6aa4e8" stroke="#c8e0f8" stroke-width="1.500"/><path d="M6 17V7H18V17H15V10H9V17z" fill="#fff"/><path d="M11 12H13V17H11z" fill="#fff"/></symbol>
	<symbol id="swi" viewBox="0 0 24 24"><path d="M1 6 5 1H23V18L19 23H1z" fill="#d81c20"/><path d="M1 6 5 1H23L19 6z" fill="#f06060"/></symbol>
	<symbol id="orb" viewBox="0 0 50 50"><circle cx="25" cy="25" r="24" fill="url(#gorb)" stroke="#1c3c58"/><path d="M3 19Q25 30 47 19A23 23 0 0 0 3 19z" fill="#fff" fill-opacity=".3"/><path d="M14 14Q19 11 24 14L22 24Q17 21 12 24z" fill="#f25a22"/><path d="M26 15Q31 18 37 15L35 25Q29 28 24 25z" fill="#7cc03a"/><path d="M11 26Q16 23 21 26L19 36Q14 33 9 36z" fill="#3b8ee8"/><path d="M23 27Q29 30 34 27L32 37Q26 40 21 37z" fill="#ffc828"/></symbol>
	<symbol id="kbd" viewBox="0 0 24 24"><path d="M1 9H23V21H1z" fill="#d0d0d0"/><path d="M3 12H21M3 15H21" stroke="#333" stroke-width="1.500" stroke-dasharray="2 1"/><path d="M6 18H18" stroke="#333" stroke-width="1.500"/><path d="M6 8Q7 3 12 5T20 1" fill="none" stroke="#999" stroke-width="1.500"/></symbol>
	<symbol id="help" viewBox="0 0 24 24"><circle cx="12" cy="12" r="10.500" fill="#1830b8" stroke="#a8b4e0" stroke-width="2"/></symbol>
	<symbol id="shield" viewBox="0 0 24 24"><path d="M12 0 22 4V15Q20 20 12 24 4 20 2 15V4z" fill="#78c828" stroke="#d8f0b0" stroke-width="1.500"/><path d="M12 6V17M7 11H17" stroke="#fff" stroke-width="3.500"/></symbol>
	<symbol id="plug" viewBox="0 0 24 24"><path d="M3 1V6M8 1V6" stroke="#ffd838" stroke-width="2"/><path d="M1 6H11V12L8 15V23H4V15L1 12z" fill="#eee"/><path d="M13 4H21V21H13z" fill="none" stroke="#ccc" stroke-width="2"/><path d="M9 11 22 23M22 11 9 23" stroke="#e02020" stroke-width="3.500"/></symbol>
	<symbol id="netw" viewBox="0 0 24 24"><path d="M7 3H23V15H7z" fill="#2878c8" stroke="#dde"/><path d="M1 7H17V19H1z" fill="#1c5ca8" stroke="#dde" stroke-width="1.500"/><path d="M5 22H13" stroke="#ccc" stroke-width="2"/><circle cx="18" cy="18" r="5.500" fill="#2c84e0"/><path d="M15 16 19 14 20 18 17 21z" fill="#3cb850"/></symbol>
	<symbol id="vol" viewBox="0 0 24 24"><path d="M1 8H6L13 1V23L6 16H1z" fill="#e0e4e8" stroke="#889"/><path d="M16 8Q19 12 16 16M19 5Q24 12 19 19" fill="none" stroke="#4cc858" stroke-width="1.500"/></symbol>
</svg>

<header class="title">
	<svg class="ic22"><use href="#nx"/></svg>
	<h1>NX 6 - 建模 - [modeling_tempalte 1.prt （修改的） ]</h1>
	<b class="brand">SIEMENS</b>
	<button class="win" title="最小化"><svg viewBox="0 0 14 14"><path d="M3 10H10" stroke="#fff" stroke-width="3"/></svg></button>
	<button class="win" title="还原"><svg viewBox="0 0 14 14"><path d="M5 5V2H12V8H9M2 6H9V12H2z" fill="none" stroke="#fff" stroke-width="2"/></svg></button>
	<button class="win close" title="关闭"><svg viewBox="0 0 14 14"><path d="M2 2 12 12M12 2 2 12" stroke="#fff" stroke-width="2.500"/></svg></button>
</header>

<nav class="menu">
	<svg class="ic22"><use href="#part"/></svg>
	<a href="#">文件(<u>F</u>)</a>
	<a href="#">编辑(<u>E</u>)</a>
	<a href="#">视图(<u>V</u>)</a>
	<a href="#">插入(<u>S</u>)</a>
	<a href="#">格式(<u>R</u>)</a>
	<a href="#">工具(<u>T</u>)</a>
	<a href="#">装配(<u>A</u>)</a>
	<a href="#">信息(<u>I</u>)</a>
	<a href="#">分析(<u>L</u>)</a>
	<a href="#">首选项(<u>P</u>)</a>
	<a href="#">窗口(<u>O</u>)</a>
	<a href="#">帮助(<u>H</u>)</a>
	<div class="mdi">
		<button title="最小化"><svg viewBox="0 0 14 14"><path d="M3 11H11" stroke="#666" stroke-width="2"/></svg></button>
		<button title="还原"><svg viewBox="0 0 14 14"><path d="M5 5V2H12V8H9M2 6H9V12H2z" fill="none" stroke="#666" stroke-width="2"/></svg></button>
		<button title="关闭"><svg viewBox="0 0 14 14"><path d="M3 3 11 11M11 3 3 11" stroke="#666" stroke-width="3"/></svg></button>
	</div>
</nav>

<div class="row">
	<div class="tb">
		<button class="start"><svg><use href="#nx"/></svg>开始<i></i></button>
		<button><svg><use href="#new"/></svg></button>
		<button><svg><use href="#open"/></svg></button>
		<button><svg><use href="#save"/></svg></button>
		<hr>
		<button><svg><use href="#cut"/></svg></button>
		<button><svg><use href="#copy"/></svg></button>
		<button><svg><use href="#paste"/></svg></button>
		<hr>
		<button><svg><use href="#undo"/></svg></button>
		<button><svg><use href="#redo"/></svg></button>
		<hr>
		<button><svg><use href="#infod"/></svg></button>
		<hr>
		<button><svg><use href="#find"/></svg></button>
		<button class="more"></button>
	</div>
	<div class="tb">
		<button><svg><use href="#fit"/></svg></button>
		<button><svg><use href="#fitg"/></svg></button>
		<button><svg><use href="#zbox"/></svg></button>
		<button><svg><use href="#zpm"/></svg></button>
		<button><svg><use href="#rot"/></svg></button>
		<button><svg><use href="#pan"/></svg></button>
		<button><svg><use href="#persp"/></svg></button>
		<hr>
		<button><svg><use href="#cube"/></svg></button><button class="dd"></button>
		<button><svg><use href="#yin"/></svg></button>
		<button><svg><use href="#laptop"/></svg></button><button class="dd"></button>
		<button><svg><use href="#white"/></svg></button><button class="dd"></button>
		<hr>
		<button><svg><use href="#sec1"/></svg></button>
		<button><svg><use href="#sec2"/></svg></button>
		<button><svg><use href="#sec3"/></svg></button>
		<hr>
		<button class="on"><svg><use href="#csys"/></svg></button>
		<button><svg><use href="#csysb"/></svg></button>
		<button><svg><use href="#ruler"/></svg></button>
		<button><svg><use href="#angle"/></svg></button>
		<button class="more"></button>
	</div>
	<div class="tb">
		<button><svg><use href="#wrench"/></svg></button>
		<button><svg><use href="#bolt"/></svg></button>
		<button><svg><use href="#bolts"/></svg></button>
		<button><svg><use href="#magc"/></svg></button>
		<button class="more"></button>
	</div>
</div>

<div class="row">
	<div class="tb first">
		<span class="combo layer"><select aria-label="图层"><option>1</option></select></span>
		<button><svg><use href="#layers"/></svg></button>
		<hr>
		<button><svg><use href="#palette"/></svg></button>
		<button><svg><use href="#shide"/></svg></button>
		<button class="more over">»</button>
	</div>
	<div class="tb">
		<button><svg><use href="#sketch"/></svg></button>
		<button><svg><use href="#line"/></svg></button><button class="dd"></button>
		<button><svg><use href="#plane"/></svg></button><button class="dd"></button>
		<button><svg><use href="#box"/></svg></button><button class="dd"></button>
		<button><svg><use href="#extr"/></svg></button><button class="dd"></button>
		<button><svg><use href="#sheet"/></svg></button><button class="dd"></button>
		<button><svg><use href="#hole"/></svg></button><button class="dd"></button>
		<button><svg><use href="#cyl"/></svg></button><button class="dd"></button>
		<button><svg><use href="#blend"/></svg></button><button class="dd"></button>
		<button><svg><use href="#pat"/></svg></button><button class="dd"></button>
		<button><svg><use href="#fil"/></svg></button><button class="dd"></button>
		<button><svg><use href="#pyr"/></svg></button><button class="dd"></button>
		<button><svg><use href="#mesh"/></svg></button><button class="dd"></button>
		<button><svg><use href="#trim"/></svg></button><button class="dd"></button>
		<button><svg><use href="#book"/></svg></button><button class="dd"></button>
		<button><svg><use href="#ublk"/></svg></button><button class="dd"></button>
		<button><svg><use href="#unite"/></svg></button><button class="dd"></button>
		<button><svg><use href="#move"/></svg></button><button class="dd"></button>
		<button><svg><use href="#dias"/></svg></button>
		<button class="more"></button>
	</div>
	<div class="tb last">
		<button><svg><use href="#unite"/></svg></button><button class="dd"></button>
		<button><svg><use href="#plane"/></svg></button><button class="dd"></button>
		<hr>
		<button><svg><use href="#pyr"/></svg></button>
		<button><svg><use href="#sph"/></svg></button>
		<hr>
		<button><svg><use href="#blend"/></svg></button>
		<button><svg><use href="#fil"/></svg></button>
		<button><svg><use href="#fil"/></svg></button>
		<button><svg><use href="#shell"/></svg></button>
		<button><svg><use href="#ublk"/></svg></button>
		<button class="more over">»</button>
	</div>
</div>

<div class="row selbar">
	<span class="combo w1"><select aria-label="过滤器"><option>没有选择过滤器</option></select></span>
	<span class="combo w2"><select aria-label="范围"><option>仅在工作部件内部</option></select></span>
	<button><svg><use href="#grays"/></svg></button>
	<hr>
	<button><svg><use href="#snap"/></svg></button><button class="dd"></button>
	<button><svg><use href="#ret"/></svg></button>
	<button><svg><use href="#erase"/></svg></button>
	<button><svg><use href="#aim"/></svg></button>
	<button><svg><use href="#hose"/></svg></button>
	<hr>
	<button><svg><use href="#dots"/></svg></button><button class="dd"></button>
	<hr>
	<span class="combo w2"><select aria-label="曲线规则"><option>特征曲线</option></select></span>
	<hr>
	<button><svg><use href="#gcube"/></svg></button>
	<button class="more"></button>
</div>

<div class="prompt">
	<p>选择截面几何图形</p>
	<p></p>
	<span></span>
	<span></span>
	<button title="全屏"><svg><use href="#full"/></svg></button>
</div>
<div class="strip"></div>

<main>
	<div class="view">
		<svg class="scene" viewBox="0 194 1320 502" preserveAspectRatio="xMinYMin meet">
			<!-- bottom plate -->
			<g stroke="#33291a" stroke-width="1.500" stroke-linejoin="round">
				<path d="M594 572 811 487 1097 567 879 653z" fill="#ffc000"/>
				<path d="M594 572 879 653V666L594 585z" fill="#7c5c00"/>
				<path d="M879 653 1097 567V580L879 666z" fill="#b38600"/>
			</g>
			<path d="M685 472 810 423 957 464 831 514z" fill="#8cccd0" fill-opacity=".5" stroke="#0c8c8c" stroke-width="2"/>
			<!-- extruded body -->
			<path d="M754 350H867L868 582A57 19 0 0 0 754 582z" fill="#97801e" fill-opacity=".42"/>
			<ellipse cx="811" cy="582" rx="57" ry="19" fill="#97801e" fill-opacity=".2"/>
			<path d="M754 582A57 19 0 0 0 868 582" fill="none" stroke="#222" stroke-width="2"/>
			<path d="M755 581A57 19 0 0 0 867 581" fill="none" stroke="#d4d0c4"/>
			<path d="M754 582A57 19 0 0 1 868 582" fill="none" stroke="#d4d0c4" stroke-width="3"/>
			<!-- top plate -->
			<g stroke="#33291a" stroke-width="1.500" stroke-linejoin="round">
				<path d="M592 301 809 215 1095 295 877 382z" fill="#ffc000"/>
				<path d="M592 301 877 382V394L592 314z" fill="#7c5c00"/>
				<path d="M877 382 1095 295V308L877 394z" fill="#b38600"/>
			</g>
			<ellipse cx="810" cy="323" rx="56" ry="19" fill="none" stroke="#d0cdbc" stroke-width="3"/>
			<path d="M820 469V402M766 490 875 446M820 469 864 482" stroke="#dcdcd4" stroke-width="2"/>
			<path d="M820 374 814 402H827z" fill="none" stroke="#dcdcd4" stroke-width="2"/>
			<path d="M743 499 766 490M868 445 896 437M872 452 900 438" stroke="#0c8c8c" stroke-width="2"/>
			<g fill="none" stroke="#cc1022" stroke-width="2">
				<path d="M822 421 852 409 854 456M822 421 857 432 860 458M866 459 890 466 861 480" stroke-dasharray="8 8"/>
				<path d="M827 418 822 421 827 424M866 479 871 483"/>
				<path d="M871 484 877 478 897 489 874 489zM867 441 885 443 868 453 871 447z" stroke="#c00a40"/>
			</g>
			<ellipse cx="810" cy="469" rx="56" ry="19" fill="none" stroke="#ff6a10" stroke-width="3"/>
			<path d="M810 333V566" stroke="#109a58" stroke-width="3" stroke-dasharray="7 9"/>
			<circle cx="809" cy="323" r="5" fill="#0c9050"/><circle cx="808" cy="321" r="2" fill="#6ad8a0"/>
			<path d="M811 563 806 581Q811 584 816 581z" fill="#0a8c60"/>
			<path d="M811 582 887 591" stroke="#2a7c30"/>
			<g class="axis">
				<text x="820" y="370" fill="#e0e0da">Z</text>
				<text x="822" y="432" fill="#e0e0da">ZC</text>
				<text x="852" y="478" fill="#e0e0da">XC</text>
				<text x="889" y="441" fill="#c00a40">Y</text>
				<text x="901" y="491" fill="#c00a40">X</text>
				<text x="876" y="452" fill="#0c8c8c">YC</text>
			</g>
			<path d="M886.500 579.500H955.500V602.500H886.500z" fill="#f0f0f0" stroke="#a0a0a0"/>
			<text class="tip" x="888" y="597">端点=-45</text>
			<!-- view triad -->
			<path d="M57 641V614" stroke="#3020e0" stroke-width="2"/>
			<path d="M57 641 76 633" stroke="#18b878" stroke-width="2"/>
			<path d="M57 641 79 647" stroke="#e02838" stroke-width="2"/>
			<circle cx="57" cy="641" r="3" fill="#888"/>
			<g class="axis">
				<text x="54" y="611" fill="#3020e0">Z</text>
				<text x="79" y="635" fill="#18b878">Y</text>
				<text x="83" y="652" fill="#e02838">X</text>
			</g>
		</svg>
	</div>

	<aside class="res">
		<button><svg><use href="#r1"/></svg></button>
		<button><svg><use href="#r2"/></svg></button>
		<button class="gap"><svg><use href="#r3"/></svg></button>
		<button class="gap"><svg><use href="#r4"/></svg></button>
		<button><svg><use href="#r5"/></svg></button>
		<button><svg><use href="#r6"/></svg></button>
		<button><svg><use href="#r7"/></svg></button>
		<button><svg><use href="#r8"/></svg></button>
		<button><svg><use href="#r9"/></svg></button>
		<button class="part"></button>
		<svg class="wave" viewBox="0 0 32 8"><path d="M0 5Q8 7 14 3T32 2" fill="none" stroke="#555"/></svg>
		<div class="pager">
			<button><svg viewBox="0 0 14 14"><path d="M3 3H11M4 10 7 6 10 10z" fill="#999" stroke="#999"/></svg></button>
			<button><svg viewBox="0 0 14 14"><path d="M4 9 7 5 10 9z" fill="#aaa"/></svg></button>
			<button><svg viewBox="0 0 14 14"><path d="M3 5H11L7 10z" fill="#222"/></svg></button>
			<button><svg viewBox="0 0 14 14"><path d="M3 3H11L7 8z" fill="#222"/><path d="M3 10H11" stroke="#222" stroke-width="2"/></svg></button>
		</div>
	</aside>

	<section class="dialog">
		<div class="rail">
			<button class="lt"><svg viewBox="0 0 16 16"><path d="M12 3 5 8 12 13" fill="none" stroke="#555" stroke-width="2.500"/></svg></button>
			<button><svg viewBox="0 0 16 16"><path d="M3 3 9 9" stroke="#fff" stroke-width="2.500"/><path d="M13 13H6L13 6z" fill="#fff"/></svg></button>
			<h2>拉伸</h2>
			<button><svg viewBox="0 0 16 16"><path d="M9 3Q14 5 13 9 10 14 4 11" fill="none" stroke="#fff" stroke-width="2.500"/><path d="M2 8 8 8 4 14z" fill="#fff"/></svg></button>
			<button><svg viewBox="0 0 16 16"><path d="M3 7H13" stroke="#fff" stroke-width="2.500"/></svg></button>
			<button><svg viewBox="0 0 16 16"><path d="M3 3 13 13M13 3 3 13" stroke="#fff" stroke-width="3"/></svg></button>
			<button class="lt"><svg viewBox="0 0 16 16"><path d="M4 3 11 8 4 13" fill="none" stroke="#555" stroke-width="2.500"/></svg></button>
		</div>
		<div class="panel">
			<div class="scroll">
				<div class="groups">
					<h3>截面<button><svg viewBox="0 0 16 16"><path d="M3 13 8 4 13 13" /></svg></button></h3>
					<div class="group">
						<div class="line hot"><svg class="ok"><use href="#check"/></svg><span>选择曲线 (1)</span>
							<button class="sm"><svg><use href="#sketch"/></svg></button>
							<button class="lg sel"><svg><use href="#curve"/></svg></button>
						</div>
					</div>
					<h3>方向<button><svg viewBox="0 0 16 16"><path d="M3 13 8 4 13 13" /></svg></button></h3>
					<div class="group">
						<div class="line"><svg class="ok"><use href="#check"/></svg><span>指定矢量 (1)</span>
							<button class="sm"><svg><use href="#vec"/></svg></button>
							<div class="split"><button><svg><use href="#flash"/></svg></button><button class="arr"></button></div>
						</div>
						<div class="line"><span>反向</span><button class="sm"><svg><use href="#rev"/></svg></button></div>
					</div>
					<h3>限制<button><svg viewBox="0 0 16 16"><path d="M3 13 8 4 13 13" /></svg></button></h3>
					<div class="group">
						<div class="line"><label for="s1">开始</label><span class="combo"><select id="s1"><option>直至选定对象</option></select></span></div>
						<div class="line"><svg class="ok"><use href="#check"/></svg><span>选择对象 (1)</span><button class="lg"><svg><use href="#face"/></svg></button></div>
						<div class="line"><label for="s2">端点</label><span class="combo"><select id="s2"><option>直到被延伸</option></select></span></div>
						<div class="line"><svg class="ok"><use href="#check"/></svg><span>选择对象 (1)</span><button class="lg"><svg><use href="#face"/></svg></button></div>
					</div>
					<h3>布尔<button><svg viewBox="0 0 16 16"><path d="M3 13 8 4 13 13" /></svg></button></h3>
					<div class="group">
						<div class="line"><label for="s3">布尔</label><span class="combo icon"><svg><use href="#none"/></svg><select id="s3"><option>无</option></select></span></div>
					</div>
					<h3>拔模<button><svg viewBox="0 0 16 16"><path d="M3 4 8 13 13 4" /></svg></button></h3>
				</div>
				<div class="bar"><button class="up"></button><div class="thumb"></div><button class="down"></button></div>
			</div>
			<div class="foot"><button class="go">确定</button><button>取消</button></div>
		</div>
	</section>
</main>

<div class="row asm">
	<div class="tb">
		<button><svg><use href="#a1"/></svg></button>
		<button><svg><use href="#a2"/></svg></button>
		<button><svg><use href="#a3"/></svg></button>
		<button><svg><use href="#a4"/></svg></button>
		<button><svg><use href="#a5"/></svg></button>
		<button><svg><use href="#a6"/></svg></button>
		<hr>
		<button><svg><use href="#a7"/></svg></button>
		<button><svg><use href="#a8"/></svg></button>
		<button><svg><use href="#a9"/></svg></button>
		<button><svg><use href="#a10"/></svg></button>
		<button><svg><use href="#a11"/></svg></button>
		<button><svg><use href="#a12"/></svg></button>
		<button><svg><use href="#a13"/></svg></button>
		<button><svg><use href="#a14"/></svg></button>
		<button><svg><use href="#a15"/></svg></button>
		<button><svg><use href="#a16"/></svg></button>
		<button><svg><use href="#a17"/></svg></button>
		<button><svg><use href="#a18"/></svg></button>
		<hr>
		<button><svg><use href="#a19"/></svg></button>
		<button><svg><use href="#a20"/></svg></button>
		<hr>
		<button><svg><use href="#a21"/></svg></button>
		<button><svg><use href="#a22"/></svg></button>
		<button><svg><use href="#chain"/></svg></button>
		<button><svg><use href="#a24"/></svg></button>
		<button><svg><use href="#a25"/></svg></button>
		<button><svg><use href="#a26"/></svg></button>
		<hr>
		<button><svg><use href="#a27"/></svg></button>
		<button class="more"></button>
	</div>
</div>

<footer class="task">
	<button class="orb" title="开始"><svg><use href="#orb"/></svg></button>
	<div class="quick">
		<button><svg><use href="#desk"/></svg></button>
		<button><svg><use href="#pc"/></svg></button>
		<button><svg><use href="#mx"/></svg></button>
		<button><svg class="glyph" viewBox="0 0 24 24"><use href="#swi" width="24" height="24"/><text x="2" y="19">SW</text></svg></button>
		<button><svg><use href="#nx"/></svg></button>
	</div>
	<button class="chev">»</button>
	<button class="app"><svg><use href="#mx"/></svg>UG拉伸功能无法双...</button>
	<button class="app cur"><svg><use href="#nx"/></svg>NX 6 - 建模 - [mod...</button>
	<div class="tray">
		<svg><use href="#kbd"/></svg>
		<svg class="glyph q" viewBox="0 0 24 24"><use href="#help" width="24" height="24"/><text x="7" y="18">?</text></svg>
		<svg class="lang" viewBox="0 0 10 22"><path d="M3 4V1H9V5H7M1 4H7V8H1z" fill="none" stroke="#fff"/><path d="M2 16H8L5 19z" fill="#fff"/></svg>
		<svg class="back" viewBox="0 0 12 12"><path d="M10 1 3 6 10 11" fill="none" stroke="#eee" stroke-width="2"/></svg>
		<svg class="sh"><use href="#shield"/></svg>
		<svg><use href="#plug"/></svg>
		<svg><use href="#netw"/></svg>
		<svg><use href="#vol"/></svg>
		<time>17:50</time>
	</div>
</footer>
</body>
</html>
```
FILE: styles.css
```css
*{
	box-sizing: border-box;
	margin: 0;
	padding: 0;
}
body{
	display: flex;
	flex-direction: column;
	height: 100vh;
	overflow: hidden;
	font: 15px/20px "Open Sans", "Noto Sans CJK SC", sans-serif;
	color: #000;
	background: #d8d8d8;
}
button, select{
	font: inherit;
	color: inherit;
	border: 0;
	background: none;
}
button{
	display: flex;
	align-items: center;
	justify-content: center;
	flex: none;
}
svg{
	display: block;
	flex: none;
}
.sprite{
	position: absolute;
}
.ic22{
	width: 22px;
	height: 22px;
}

/* title bar */
.title{
	display: flex;
	align-items: center;
	flex: none;
	height: 25px;
	padding: 0 2px 0 3px;
	color: #fff;
	border-top: 1px solid #000;
	background: linear-gradient(#777, #505053 36%, #1c1c1c 42%, #1c1c1c);
}
.title h1{
	margin-left: 5px;
	font-size: 16px;
	font-weight: normal;
}
.brand{
	margin: 0 27px 0 auto;
	font: 800 16px/20px "Open Sans", sans-serif;
}
.win{
	width: 22px;
	height: 21px;
	margin-left: 3px;
	border: 1px solid #888;
	border-radius: 3px;
	background: linear-gradient(#777, #444 45%, #2a2a2a 50%, #444);
}
.win svg{
	width: 14px;
	height: 14px;
}
.close{
	border-color: #d88;
	background: linear-gradient(#f08868, #e0482c 50%, #d83818);
}

/* menu */
.menu{
	display: flex;
	align-items: center;
	flex: none;
	height: 28px;
	padding: 0 6px 0 7px;
	font-size: 16px;
	background: #e2e2e2;
}
.menu a{
	margin-right: 13px;
	color: #000;
	text-decoration: none;
	white-space: nowrap;
}
.menu .ic22{
	margin-right: 7px;
}
.mdi{
	display: flex;
	gap: 3px;
	margin-left: auto;
}
.mdi button{
	width: 16px;
	height: 16px;
	border: 1px solid #666;
	border-radius: 3px;
	background: #f4f4f4;
}
.mdi svg{
	width: 12px;
	height: 12px;
}

/* toolbars */
.row{
	display: flex;
	flex: none;
	height: 34px;
	border-top: 1px solid #bbb;
	background: linear-gradient(#e4e4e4, #d0d0d0);
}
.tb{
	display: flex;
	align-items: center;
	padding-left: 8px;
	border-right: 1px solid #b4b4b4;
	box-shadow: 1px 0 0 #f4f4f4;
	background: radial-gradient(circle, #aaa 1px, transparent 1px) 2px 5px / 4px 4px repeat-y;
}
.tb button{
	width: 31px;
	height: 31px;
}
.tb svg{
	width: 24px;
	height: 24px;
}
.tb .on{
	border: 1px solid #666;
	border-radius: 3px;
	background: #fff;
}
.row hr{
	width: 2px;
	height: 30px;
	margin: 0 2px;
	border: 0;
	border-left: 1px solid #b8b8b8;
	border-right: 1px solid #f6f6f6;
}
.tb .dd{
	width: 12px;
}
.dd::after, .start i, .more::after{
	border: 3px solid transparent;
	border-top-color: #000;
	border-bottom: 0;
	content: "";
}
.tb .start{
	width: 75px;
	justify-content: flex-start;
	gap: 4px;
	padding-left: 3px;
}
.tb .more{
	flex-direction: column;
	justify-content: flex-end;
	width: 13px;
	padding-bottom: 5px;
	font: bold 14px/14px "Liberation Sans", sans-serif;
}
.tb .over{
	justify-content: space-between;
}
.first{
	width: 207px;
	padding-left: 12px;
}
.first .over, .last .over{
	margin-left: auto;
}
.last{
	flex: 1;
	padding-right: 3px;
}

/* combo boxes */
.combo{
	position: relative;
	display: flex;
	flex: none;
	width: 150px;
	height: 26px;
	border: 1px solid #586868;
	border-radius: 4px;
	background: #c6ecca;
	box-shadow: 0 1px 0 #fff, inset 1px 1px 0 #fff;
}
.combo select{
	flex: 1;
	padding: 0 22px 0 4px;
	appearance: none;
	outline: 0;
}
.combo::after, .arr{
	width: 20px;
	background: linear-gradient(#c8dcf4, #7cb0e4 48%, #3c84d4 52%, #8cc8f8);
	border-left: 1px solid #4868a8;
	border-radius: 0 3px 3px 0;
}
.combo::after{
	position: absolute;
	top: 0;
	right: 0;
	bottom: 0;
	content: "";
	pointer-events: none;
}
.combo::before, .arr::after{
	border: 5px solid transparent;
	border-top: 6px solid #111;
	border-bottom: 0;
	content: "";
}
.combo::before{
	position: absolute;
	z-index: 1;
	top: 8px;
	right: 5px;
	pointer-events: none;
}
.layer{
	width: 58px;
	height: 22px;
	margin-right: 4px;
}
.icon svg{
	width: 17px;
	height: 17px;
	margin: 3px 0 0 3px;
}

/* selection bar */
.selbar{
	height: 33px;
	align-items: center;
	padding: 0 5px 0 6px;
	font-size: 16px;
	border-top: 1px solid #999;
	background: linear-gradient(#c4c4c4, #d4d4d4 40%, #d8d8d8);
}
.selbar .combo{
	height: 22px;
}
.selbar .combo select{
	padding-left: 2px;
}
.selbar .w1{
	width: 177px;
	margin-right: 9px;
}
.selbar .w2{
	width: 187px;
	margin-right: 3px;
}
.selbar button{
	width: 24px;
	height: 28px;
}
.selbar .dd{
	width: 6px;
}
.selbar svg{
	width: 18px;
	height: 18px;
}
.selbar hr{
	margin: 0 3px;
}
.selbar .more{
	width: 8px;
	margin-left: auto;
	align-items: flex-end;
}

.prompt{
	display: flex;
	flex: none;
	height: 23px;
	font-size: 17px;
	line-height: 22px;
	font-weight: bold;
	border-top: 1px solid #f4f4f4;
	background: #d8d8d8;
}
.prompt p{
	flex: 1;
	padding-left: 3px;
	border-right: 1px solid #f4f4f4;
}
.prompt span{
	width: 20px;
	border-right: 1px solid #f4f4f4;
}
.prompt span + span{
	width: 36px;
}
.prompt button{
	width: 22px;
}
.prompt svg{
	width: 14px;
	height: 14px;
}
.strip{
	flex: none;
	height: 17px;
	border-top: 1px solid #888;
	border-bottom: 2px solid #666;
	background: linear-gradient(#b8b8b8 4px, #888 4px, #888 5px, #c8c8c8 5px, #eee 9px, #c8c8c8);
}

/* graphics area */
main{
	position: relative;
	display: flex;
	flex: 1;
	min-height: 0;
	background: #eee;
}
.view{
	flex: 1;
	border-left: 2px solid #777;
	background: linear-gradient(#9abfdd, #c8d6e2 48%, #e6e6e6 70%, #e6e6e6);
}
.scene{
	width: 100%;
	height: 100%;
	margin-left: -2px;
}
.axis text{
	font: 9px "Liberation Sans", sans-serif;
}
.tip{
	font: 16px "Open Sans", "Noto Sans CJK SC", sans-serif;
}

/* resource bar */
.res{
	flex: none;
	width: 32px;
	margin-left: 12px;
	padding-top: 15px;
	border-left: 1px solid #555;
	background: #b0b0b0;
}
.res > button{
	width: 26px;
	height: 40px;
	margin-bottom: 2px;
	border: 1px solid #666;
	border-left: 0;
	border-radius: 0 4px 4px 0;
	background: #dcdcdc;
}
.res > button svg{
	width: 22px;
	height: 22px;
}
.res .gap{
	margin-bottom: 14px;
}
.res .part{
	height: 12px;
	margin: 0;
	border-bottom: 2px solid #1a3c90;
	border-radius: 0 4px 0 0;
}
.wave{
	width: 32px;
	height: 8px;
}
.pager{
	width: 16px;
	margin-left: 5px;
}
.pager button{
	width: 16px;
	height: 16px;
	border: 1px solid #888;
	background: #eee;
}
.pager svg{
	width: 14px;
	height: 14px;
}

/* floating dialog */
.dialog{
	position: absolute;
	left: 155px;
	top: -16px;
	width: 408px;
}
.rail{
	display: flex;
	width: 196px;
	height: 25px;
	border: 1px solid #777;
}
.rail button, .rail h2{
	flex: 1;
	font-size: 17px;
	line-height: 23px;
	color: #fff;
	border-right: 1px solid #999;
	background: linear-gradient(#555, #333 45%, #111 50%, #1c1c1c);
}
.rail h2{
	flex: none;
	width: 49px;
	padding-left: 4px;
}
.rail .lt{
	background: linear-gradient(#fff, #d4d4d4);
}
.rail svg{
	width: 14px;
	height: 14px;
}
.panel{
	border: 1px solid #777;
	border-bottom: 8px solid #161616;
	border-radius: 0 0 6px 6px;
	background: #ececec;
}
.scroll{
	display: flex;
	gap: 2px;
	margin: 0 5px 0 6px;
	padding: 7px 0 3px;
	border-bottom: 1px solid #aaa;
}
.groups{
	flex: 1;
}
.groups h3{
	display: flex;
	justify-content: space-between;
	height: 25px;
	padding-left: 6px;
	font-size: 16px;
	line-height: 24px;
	background: linear-gradient(#fdfdfd, #f2f2f2 55%, #dcdcde 60%, #e4e4e4);
}
.groups h3 button{
	width: 26px;
	height: 25px;
	border-left: 1px solid #aaa;
}
.groups h3 svg{
	width: 14px;
	height: 14px;
	fill: none;
	stroke: #555;
	stroke-width: 3px;
}
.group{
	display: flex;
	flex-direction: column;
	gap: 4px;
	padding: 7px 8px 10px 7px;
	border-top: 1px solid #777;
	border-left: 1px solid #999;
	border-right: 1px solid #999;
	background: #d2d2d2;
}
.line{
	display: flex;
	align-items: center;
	gap: 4px;
}
.line > span:not(.combo), .line label{
	flex: 1;
}
.hot{
	border-radius: 6px;
	background: linear-gradient(90deg, #e8a468, #d2d2d2 85%);
}
.ok{
	width: 14px;
	height: 14px;
	margin: 0 1px;
}
.sm, .lg, .split{
	border: 1px solid #666;
	border-radius: 4px;
	background: linear-gradient(#fcfcfc, #dedede);
	box-shadow: 0 1px 0 #fff;
}
.sm{
	width: 22px;
	height: 22px;
}
.sm svg{
	width: 17px;
	height: 17px;
}
.lg{
	width: 30px;
	height: 30px;
}
.lg svg, .split svg{
	width: 24px;
	height: 24px;
}
.sel{
	border-color: #944418;
	background: linear-gradient(#fbb080, #ff8a48 60%, #ffc898);
}
.split{
	display: flex;
	width: 49px;
	height: 30px;
}
.split button{
	flex: 1;
}
.split .arr{
	flex: none;
	width: 20px;
}

.bar{
	display: flex;
	flex-direction: column;
	width: 20px;
	padding-right: 1px;
}
.bar button{
	height: 20px;
	border: 1px solid #999;
	background: linear-gradient(#f4f4f4, #ccc);
}
.up::after, .down::after{
	border: 4px solid transparent;
	border-bottom-color: #444;
	border-top: 0;
	content: "";
}
.down::after{
	transform: rotate(180deg);
}
.thumb{
	height: 326px;
	margin: 1px 0 auto;
	border: 1px solid #3c78a8;
	background:
		repeating-linear-gradient(#3878a8 0 1px, transparent 1px 4px) center / 8px 12px no-repeat,
		linear-gradient(90deg, #d4eefc, #a0d8f8 40%, #a8dcfa);
}
.foot{
	display: flex;
	justify-content: flex-end;
	gap: 7px;
	padding: 5px 16px 10px;
}
.foot button{
	width: 58px;
	height: 26px;
	border: 1px solid #666;
	border-radius: 4px;
	background: linear-gradient(#fafafa, #e0e0e0 48%, #c4c4c4 52%, #eee);
}
.foot .go{
	border-color: #385c28;
	background: linear-gradient(#d8f4c4, #a4dc84 48%, #6cc448 52%, #a8f078);
}

.asm{
	height: 36px;
	border-top: 1px solid #fff;
}
.asm .tb{
	padding-left: 7px;
}

/* taskbar */
.task{
	display: flex;
	align-items: center;
	flex: none;
	height: 36px;
	color: #fff;
	border-top: 1px solid #444;
	background: linear-gradient(#777, #444 38%, #000 42%, #000);
}
.orb{
	width: 50px;
	height: 50px;
	margin: -6px 15px -8px 11px;
	z-index: 1;
}
.orb svg{
	width: 50px;
	height: 50px;
}
.quick{
	display: flex;
	gap: 7px;
}
.quick svg, .app svg{
	width: 22px;
	height: 22px;
}
.glyph text{
	font: bold 12px "Liberation Sans", sans-serif;
	fill: #fff;
}
.q text{
	font-size: 16px;
}
.chev{
	margin: 0 11px 16px 31px;
	font: bold 16px/16px "Liberation Sans", sans-serif;
}
.app{
	justify-content: flex-start;
	gap: 5px;
	width: 196px;
	height: 32px;
	margin-right: 4px;
	padding-left: 7px;
	white-space: nowrap;
	border: 1px solid #888;
	border-radius: 3px;
	background: linear-gradient(#666, #333 40%, #080808 45%, #111);
}
.cur{
	background: linear-gradient(#333, #161616 45%, #000 50%, #222);
}
.tray{
	display: flex;
	align-items: center;
	gap: 3px;
	margin-left: auto;
	padding-right: 15px;
}
.tray svg{
	width: 21px;
	height: 21px;
}
.tray svg + svg{
	margin-left: 1px;
}
.tray .q{
	margin-left: 4px;
}
.tray .lang{
	width: 18px;
	margin-left: 2px;
}
.tray .back{
	width: 12px;
	height: 12px;
	margin-left: 4px;
}
.tray .sh{
	margin: 0 11px 0 8px;
}
.tray time{
	margin-left: 8px;
	font-size: 16px;
}
```
